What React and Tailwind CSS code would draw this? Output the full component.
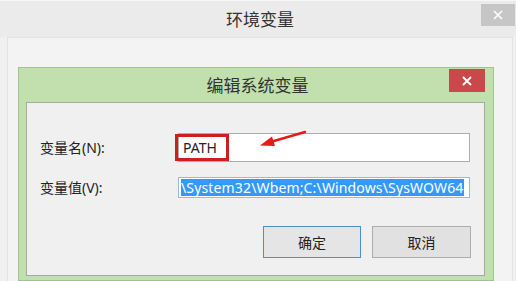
import React from "react";

const cjk = { fontFamily: '"Segoe UI", "Noto Sans", "Noto Sans CJK SC", sans-serif' };

export default function App() {
  return (
    <div className="w-[516px] h-[281px] overflow-hidden bg-[#f0f0f0] flex flex-col" style={cjk}>
      {/* outer title bar */}
      <div className="relative h-[37px] shrink-0 bg-[#ebebeb] border-t border-[#f7f7f7] flex items-center justify-center">
        <span className="text-[17px] text-[#333] leading-none ml-[4px]">环境变量</span>
        <div className="absolute right-[1px] top-[3px] w-[34px] h-[22px] bg-[#c6c6c6] flex items-center justify-center">
          <svg width="10" height="10" viewBox="0 0 10 10">
            <path d="M1 1L9 9M9 1L1 9" stroke="#fff" strokeWidth="1.6" />
          </svg>
        </div>
      </div>
      {/* outer body panel */}
      <div className="flex-1 ml-[7px] mr-[3px] bg-[#f3f3f3] border-l border-t border-r border-[#e2e2e2] pl-[10px] pt-[29px] flex">
        {/* green dialog */}
        <div className="w-[476px] bg-[#c1e0ae] border border-[#9fc48d] flex flex-col pl-[7px] pr-[8px] pb-[4px]">
          <div className="relative h-[34px] shrink-0 flex items-center justify-center">
            <span className="text-[17px] text-[#333] leading-none ml-[4px]">编辑系统变量</span>
            <div className="absolute right-0 top-[1px] w-[36px] h-[23px] bg-[#c9494b] flex items-center justify-center">
              <svg width="10" height="10" viewBox="0 0 10 10">
                <path d="M1 1L9 9M9 1L1 9" stroke="#fff" strokeWidth="1.8" />
              </svg>
            </div>
          </div>
          {/* content */}
          <div className="relative flex-1 bg-[#f0f0f0] border border-[#a7a7a7] pt-[30px] pl-[13px] pr-[14px] flex flex-col">
            <div className="flex items-center h-[29px]">
              <div className="w-[138px] text-[14px] text-[#222]">变量名(N):</div>
              <div className="relative flex-1 h-[29px] bg-white border border-[#acacac] flex items-center pl-[4px]">
                <span className="text-[14px] text-[#222] leading-none">PATH</span>
                <div className="absolute left-[-4px] top-[0px] w-[54px] h-[27px] border-[3px] border-[#cc1f1f]" />
              </div>
            </div>
            <div className="flex items-center h-[21px] mt-[15px]">
              <div className="w-[138px] text-[14px] text-[#222]">变量值(V):</div>
              <div className="flex-1 h-[21px] bg-white border border-[#9fb9d6] overflow-hidden flex items-center pl-[2px]">
                <span className="bg-[#3399ff] text-white text-[14px] leading-[17px] whitespace-nowrap tracking-[0.15px]">\System32\Wbem;C:\Windows\SysWOW64</span>
              </div>
            </div>
            <div className="flex justify-end mt-[28px] gap-[11px] mr-[-1px]">
              <div className="w-[98px] h-[32px] bg-[#e5e5e5] border border-[#4a8fd0] flex items-center justify-center text-[14px] text-[#222]">确定</div>
              <div className="w-[99px] h-[32px] bg-[#e1e1e1] border border-[#adadad] flex items-center justify-center text-[14px] text-[#222]">取消</div>
            </div>
            {/* annotation arrow */}
            <svg className="absolute left-[230px] top-[26px]" width="50" height="20" viewBox="0 0 50 20">
              <line x1="48" y1="3" x2="10" y2="14" stroke="#e51b1b" strokeWidth="2.4" strokeLinecap="round" />
              <polygon points="3,16.5 15,7.5 18,17" fill="#e51b1b" />
            </svg>
          </div>
        </div>
      </div>
    </div>
  );
}
